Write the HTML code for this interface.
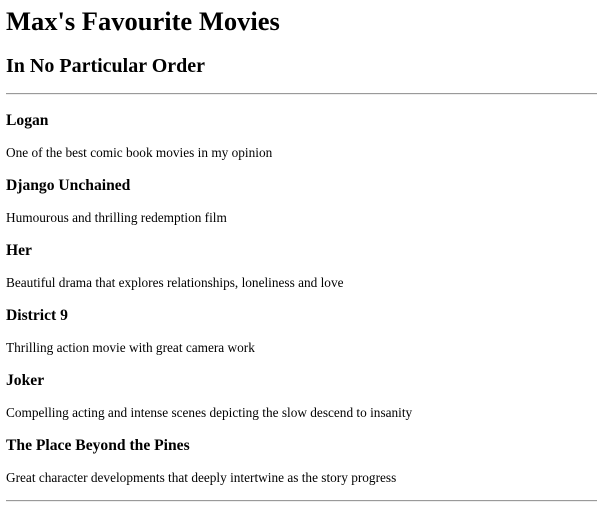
<!DOCTYPE html>
<html><head><style>
html,body{margin:0;padding:0;background:#fff;}
body{font-family:"Liberation Serif",serif;color:#000;padding:0 6px;width:591px;}
h1{font-size:26.5px;line-height:28px;margin:7px 0 0;}
h2{font-size:20px;line-height:22px;margin:20px 0 0;}
hr{border:0;border-top:1px solid #9a9a9a;border-bottom:1px solid #eee;margin:16px 0 0;height:0;}
h3{font-size:15.6px;line-height:17px;margin:17px 0 0;}
p{font-size:13.3px;line-height:15px;margin:16px 0 0;}
hr.end{margin-top:15px;}
</style></head><body>
<h1>Max's Favourite Movies</h1>
<h2>In No Particular Order</h2>
<hr>
<h3>Logan</h3>
<p>One of the best comic book movies in my opinion</p>
<h3>Django Unchained</h3>
<p>Humourous and thrilling redemption film</p>
<h3>Her</h3>
<p>Beautiful drama that explores relationships, loneliness and love</p>
<h3>District 9</h3>
<p>Thrilling action movie with great camera work</p>
<h3>Joker</h3>
<p>Compelling acting and intense scenes depicting the slow descend to insanity</p>
<h3>The Place Beyond the Pines</h3>
<p>Great character developments that deeply intertwine as the story progress</p>
<hr class="end">
</body></html>
